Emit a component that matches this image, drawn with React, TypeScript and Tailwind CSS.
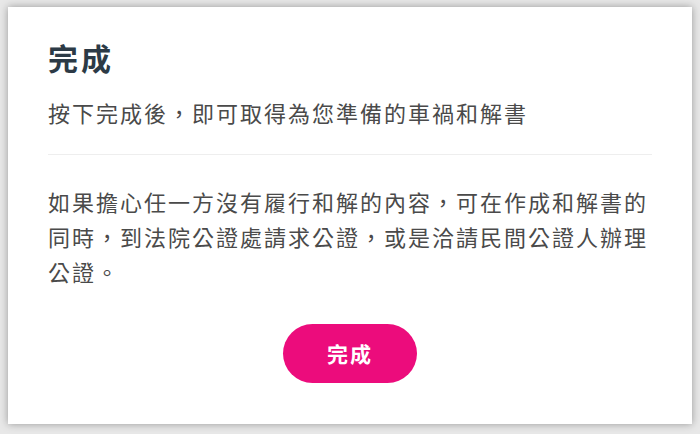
export default function App() {
  return (
    <div
      className="w-[700px] h-[434px] bg-[#e8e8e8] pt-[7px] pb-[10px] px-[8px]"
      style={{ fontFamily: '"Noto Sans CJK TC", "Noto Sans", sans-serif' }}
    >
      <div className="h-full bg-white shadow-[0_0_8px_rgba(0,0,0,0.35)] px-10 pt-[30px] flex flex-col">
        <h1 className="text-[30px] leading-[40px] font-bold tracking-[3px] text-[#2c3a46]">完成</h1>
        <p className="mt-[19px] text-[22px] leading-[32px] tracking-[2px] text-[#4a4a4a]">
          按下完成後，即可取得為您準備的車禍和解書
        </p>
        <div className="mt-[26px] border-t border-[#eeeeee]" />
        <p className="mt-[29px] text-[22px] leading-[35px] tracking-[2px] text-[#4a4a4a]">
          如果擔心任一方沒有履行和解的內容，可在作成和解書的同時，到法院公證處請求公證，或是洽請民間公證人辦理公證。
        </p>
        <div className="mt-[35px] flex justify-center">
          <button className="w-[134px] h-[59px] rounded-full bg-[#ec0c7c] text-white text-[21px] font-bold tracking-[2px]">
            完成
          </button>
        </div>
      </div>
    </div>
  );
}
